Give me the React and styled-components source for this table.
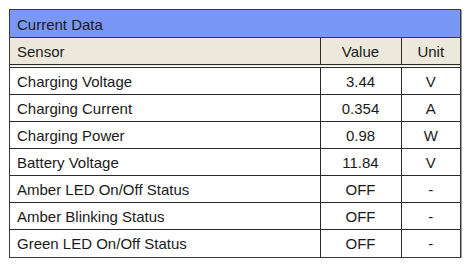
import React from "react";
import styled, { createGlobalStyle } from "styled-components";

const Global = createGlobalStyle`
  html, body { margin: 0; padding: 0; background: #fff; }
  body { font-family: "Liberation Sans", Arial, Helvetica, sans-serif; }
`;

const Page = styled.div`
  padding: 9px 0 0 9px;
`;

const Panel = styled.div`
  width: 450px;
  border: 1px solid #3a3a3a;
  box-shadow: 1px 1px 0 #9a9a9a;
  background: #fff;
`;

const Title = styled.div`
  height: 27px;
  line-height: 29px;
  background: #7b97f6;
  border-bottom: 1px solid #3a3a3a;
  padding-left: 7px;
  font-size: 15px;
  color: #1a1a1a;
`;

const Table = styled.table`
  width: 100%;
  border-collapse: collapse;
  table-layout: fixed;
  font-size: 15px;
  color: #1a1a1a;
`;

const HeadRow = styled.tr`
  background: #ece9dc;
  border-bottom: 4px double #2a2a2a;
`;

const Row = styled.tr`
  border-top: 1px solid #2a2a2a;
  &:first-child { border-top: none; }
`;

const Cell = styled.td`
  box-sizing: border-box;
  height: 27px;
  padding: 2px 0 0 ${p => (p.$align === "left" ? "7px" : "0")};
  text-align: ${p => p.$align || "center"};
  border-left: ${p => (p.$first ? "none" : "1px solid #2a2a2a")};
  white-space: nowrap;
  line-height: 24px;
`;

const HeadCell = styled(Cell).attrs({ as: "th" })`
  font-weight: normal;
`;

const rows = [
  ["Charging Voltage", "3.44", "V"],
  ["Charging Current", "0.354", "A"],
  ["Charging Power", "0.98", "W"],
  ["Battery Voltage", "11.84", "V"],
  ["Amber LED On/Off Status", "OFF", "-"],
  ["Amber Blinking Status", "OFF", "-"],
  ["Green LED On/Off Status", "OFF", "-"],
];

export default function App() {
  return (
    <Page>
      <Global />
      <Panel>
        <Title>Current Data</Title>
        <Table>
          <colgroup>
            <col style={{ width: 310 }} />
            <col style={{ width: 81 }} />
            <col />
          </colgroup>
          <thead>
            <HeadRow>
              <HeadCell $align="left" $first>Sensor</HeadCell>
              <HeadCell>Value</HeadCell>
              <HeadCell>Unit</HeadCell>
            </HeadRow>
          </thead>
          <tbody>
            {rows.map(([name, value, unit]) => (
              <Row key={name}>
                <Cell $align="left" $first>{name}</Cell>
                <Cell>{value}</Cell>
                <Cell>{unit}</Cell>
              </Row>
            ))}
          </tbody>
        </Table>
      </Panel>
    </Page>
  );
}
